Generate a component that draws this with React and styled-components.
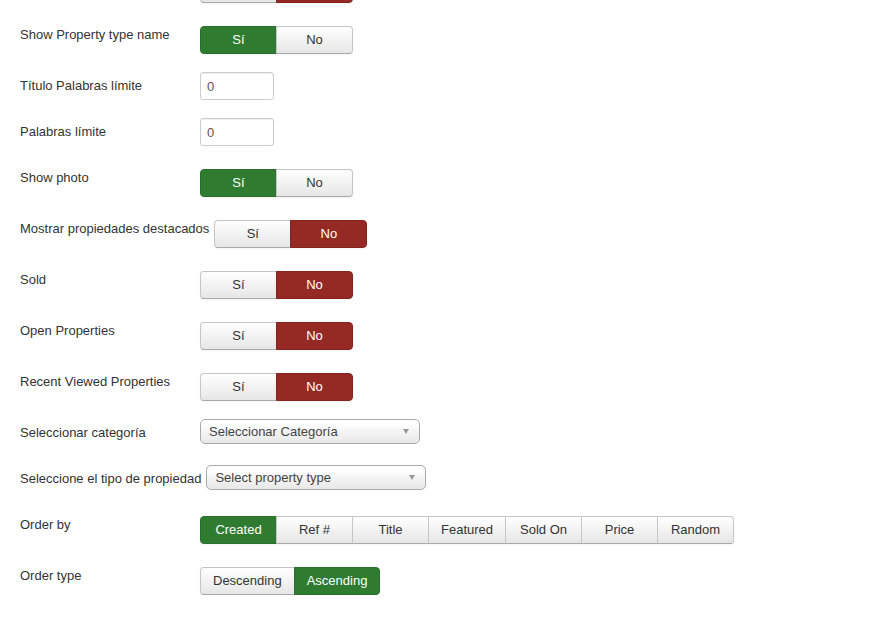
import React from 'react';
import styled, { createGlobalStyle } from 'styled-components';

const GlobalStyle = createGlobalStyle`
  html, body {
    margin: 0;
    padding: 0;
    background: #fff;
    overflow: hidden;
  }
  body {
    font-family: "Liberation Sans", Arial, sans-serif;
    font-size: 13px;
    color: #333;
  }
`;

// Form wrapper, scrolled slightly so the previous row is cut off
const Form = styled.div`
  display: flex;
  flex-direction: column;
  gap: 18px;
  padding-left: 20px;
  margin-top: -30px;
`;

const Row = styled.div`
  display: flex;
  align-items: flex-start;
  min-height: ${(p) => p.$min || 0}px;
`;

const Label = styled.label`
  min-width: 180px;
  box-sizing: border-box;
  padding: 5px 5px 0 0;
  line-height: 18px;
  white-space: nowrap;
`;

const Group = styled.div`
  display: flex;
  margin-top: 5px;
  border-radius: 4px;
  box-shadow: 0 1px 2px rgba(0, 0, 0, 0.05);
`;

const Btn = styled.span`
  display: flex;
  align-items: center;
  justify-content: center;
  box-sizing: border-box;
  height: 28px;
  min-width: 77px;
  padding: 0 12px 1px;
  font-size: 13px;
  border: 1px solid;
  margin-left: -1px;
  color: ${(p) => (p.$tone ? '#fff' : '#333')};
  background: ${(p) =>
    p.$tone === 'green'
      ? '#2f7c31'
      : p.$tone === 'red'
      ? '#952a24'
      : 'linear-gradient(to bottom, #ffffff, #e6e6e6)'};
  border-color: ${(p) =>
    p.$tone === 'green'
      ? '#2a6e2c'
      : p.$tone === 'red'
      ? '#84241f'
      : '#c5c5c5 #c5c5c5 #a9a9a9'};

  &:first-child {
    margin-left: 0;
    border-radius: 4px 0 0 4px;
  }
  &:last-child {
    border-radius: 0 4px 4px 0;
  }
`;

const Input = styled.div`
  box-sizing: border-box;
  width: 74px;
  height: 28px;
  padding: 0 6px;
  display: flex;
  align-items: center;
  border: 1px solid #ccc;
  border-radius: 3px;
  box-shadow: inset 0 1px 1px rgba(0, 0, 0, 0.075);
  color: #555;
`;

const Select = styled.div`
  box-sizing: border-box;
  width: 220px;
  height: 25px;
  padding: 0 8px;
  display: flex;
  align-items: center;
  justify-content: space-between;
  border: 1px solid #aaa;
  border-radius: 5px;
  background: linear-gradient(to bottom, #ffffff 20%, #f4f4f4 50%, #e8e8e8 100%);
  color: #444;
`;

const Caret = styled.span`
  width: 0;
  height: 0;
  border-left: 3px solid transparent;
  border-right: 3px solid transparent;
  border-top: 5px solid #999;
  margin-right: 2px;
`;

const YesNo = ({ value, bare }) => (
  <Group>
    <Btn $tone={value ? 'green' : undefined}>{bare ? '' : 'Sí'}</Btn>
    <Btn $tone={value ? undefined : 'red'}>{bare ? '' : 'No'}</Btn>
  </Group>
);

const orderBy = ['Created', 'Ref #', 'Title', 'Featured', 'Sold On', 'Price', 'Random'];

const App = () => (
  <>
    <GlobalStyle />
    <Form>
      <Row>
        <Label />
        <YesNo value={false} bare />
      </Row>
      <Row>
        <Label>Show Property type name</Label>
        <YesNo value />
      </Row>
      <Row>
        <Label>Título Palabras límite</Label>
        <Input>0</Input>
      </Row>
      <Row>
        <Label>Palabras límite</Label>
        <Input>0</Input>
      </Row>
      <Row>
        <Label>Show photo</Label>
        <YesNo value />
      </Row>
      <Row>
        <Label>Mostrar propiedades destacados</Label>
        <YesNo value={false} />
      </Row>
      <Row>
        <Label>Sold</Label>
        <YesNo value={false} />
      </Row>
      <Row>
        <Label>Open Properties</Label>
        <YesNo value={false} />
      </Row>
      <Row>
        <Label>Recent Viewed Properties</Label>
        <YesNo value={false} />
      </Row>
      <Row $min={28}>
        <Label>Seleccionar categoría</Label>
        <Select>
          Seleccionar Categoría
          <Caret />
        </Select>
      </Row>
      <Row $min={28}>
        <Label>Seleccione el tipo de propiedad</Label>
        <Select>
          Select property type
          <Caret />
        </Select>
      </Row>
      <Row>
        <Label>Order by</Label>
        <Group>
          {orderBy.map((o, i) => (
            <Btn key={o} $tone={i === 0 ? 'green' : undefined}>
              {o}
            </Btn>
          ))}
        </Group>
      </Row>
      <Row>
        <Label>Order type</Label>
        <Group>
          <Btn>Descending</Btn>
          <Btn $tone="green">Ascending</Btn>
        </Group>
      </Row>
    </Form>
  </>
);

export default App;
